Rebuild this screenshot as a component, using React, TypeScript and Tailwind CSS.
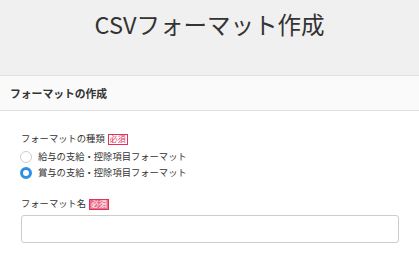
import React from "react";

const font = { fontFamily: '"Noto Sans CJK JP", "Noto Sans", sans-serif' };

function Badge({ filled }: { filled?: boolean }) {
  return (
    <span
      className={
        "ml-[3px] inline-flex h-[11px] w-[20px] items-center justify-center border text-[8px] leading-none " +
        (filled
          ? "border-[#e0315a] bg-[#ec6f8a] text-white"
          : "border-[#e0315a] bg-white text-[#e0315a]")
      }
    >
      必須
    </span>
  );
}

function Radio({ checked, label }: { checked?: boolean; label: string }) {
  return (
    <div className="flex h-[16px] items-center">
      <span
        className={
          "box-border inline-block h-[12px] w-[12px] rounded-full " +
          (checked
            ? "border-[3.5px] border-[#2f8fe3] bg-white"
            : "border border-[#cfcfcf] bg-white")
        }
      />
      <span className="ml-[6px] text-[9.3px] leading-none text-[#333]">{label}</span>
    </div>
  );
}

export default function App() {
  return (
    <div className="w-[419px] h-[255px] overflow-hidden bg-white" style={font}>
      <div className="h-[75px] bg-[#f0f0f0] pt-[8px] text-center">
        <h1 className="text-[23.5px] leading-[32px] text-[#333] font-normal">CSVフォーマット作成</h1>
      </div>
      <div className="flex h-[36px] items-center border-y border-[#e0e0e0] bg-[#fafafa] px-[10px]">
        <span className="text-[10.8px] font-bold text-[#333]">フォーマットの作成</span>
      </div>
      <div className="px-[21px] pt-[21px]">
        <div className="flex h-[14px] items-center">
          <span className="text-[9.3px] leading-none text-[#333]">フォーマットの種類</span>
          <Badge />
        </div>
        <div className="mt-[3px] -ml-[1px]">
          <Radio label="給与の支給・控除項目フォーマット" />
          <Radio checked label="賞与の支給・控除項目フォーマット" />
        </div>
        <div className="mt-[16px] flex h-[14px] items-center">
          <span className="text-[9.3px] leading-none text-[#333]">フォーマット名</span>
          <Badge filled />
        </div>
        <input
          type="text"
          className="mt-[4px] block h-[28px] w-[378px] rounded-[3px] border border-[#cccccc] bg-white outline-none"
        />
      </div>
    </div>
  );
}
